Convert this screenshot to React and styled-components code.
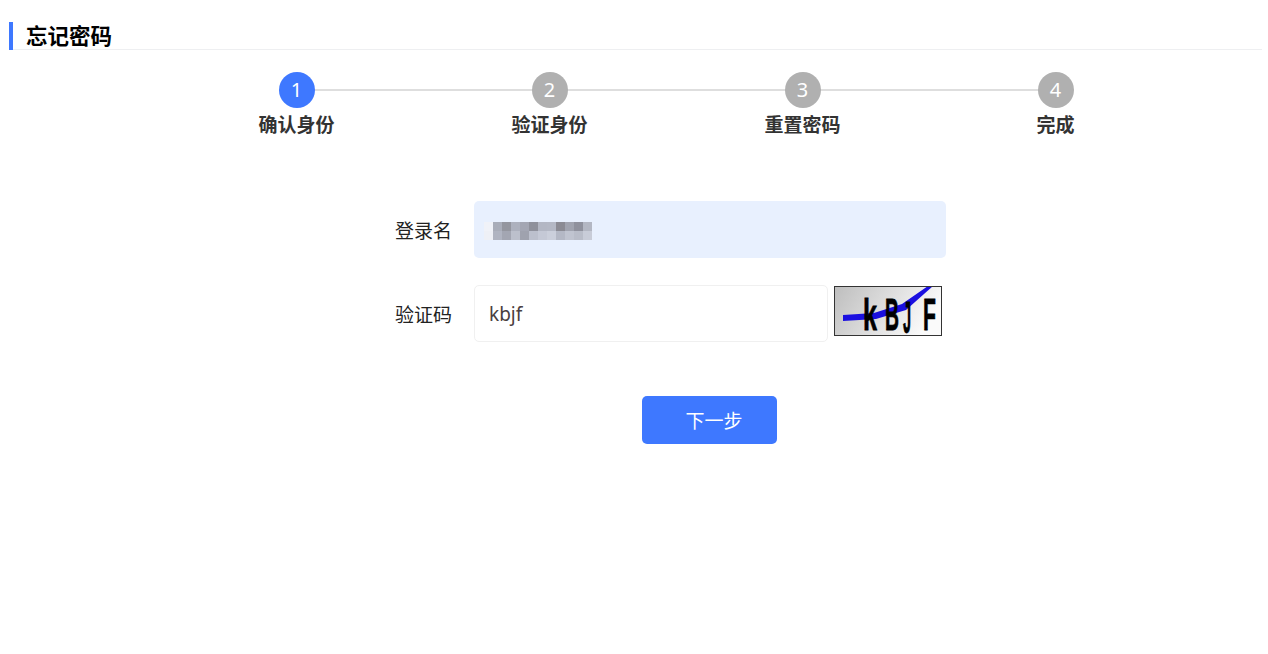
import React from "react";
import styled, { createGlobalStyle } from "styled-components";

const GlobalStyle = createGlobalStyle`
  html, body {
    margin: 0;
    padding: 0;
    background: #fff;
    font-family: "Noto Sans", "Noto Sans CJK SC", sans-serif;
  }
  * {
    box-sizing: border-box;
  }
`;

const steps = ["确认身份", "验证身份", "重置密码", "完成"];

// blurred login name, two rows of grey squares
const mosaicRows = [
  ["#f0f2f8", "#a9adb9", "#94969f", "#adb1be", "#a3a6b3", "#8f919c", "#b3b7c4", "#b4b8c5", "#8b8b94", "#a0a3af", "#8f919d", "#b3b7c3"],
  ["#eef0f6", "#b0b4c1", "#a3a6b2", "#bcc0cc", "#9fa2ae", "#bcc0cd", "#c5c9d6", "#cbcfdb", "#b4b8c5", "#c0c4d0", "#b9bdc9", "#c8ccd8"],
];

// squeezed letters, sx is the horizontal scale
const captchaLetters = [
  { ch: "k", x: 29, y: 44, sx: 0.57 },
  { ch: "B", x: 51, y: 44, sx: 0.44 },
  { ch: "J", x: 69, y: 47, sx: 0.33 },
  { ch: "F", x: 89, y: 44, sx: 0.48 },
];

function App() {
  return (
    <Page>
      <GlobalStyle />
      <Header>
        <Title>忘记密码</Title>
      </Header>
      <Stepper>
        {steps.map((label, i) => (
          <Step key={label} $last={i === steps.length - 1}>
            <Circle $active={i === 0}>{i + 1}</Circle>
            <StepLabel>{label}</StepLabel>
          </Step>
        ))}
      </Stepper>
      <Form>
        <Row>
          <Label>登录名</Label>
          <FilledField>
            <Mosaic>
              {mosaicRows.flat().map((c, i) => (
                <MosaicCell key={i} $color={c} />
              ))}
            </Mosaic>
          </FilledField>
        </Row>
        <Row $top={27}>
          <Label>验证码</Label>
          <Field>kbjf</Field>
          <Captcha />
        </Row>
        <Actions>
          <NextButton>下一步</NextButton>
        </Actions>
      </Form>
    </Page>
  );
}

function Captcha() {
  return (
    <CaptchaBox viewBox="0 0 108 50" width="108" height="50">
      <defs>
        <linearGradient id="captchaBg" x1="0" y1="0" x2="1" y2="0.3">
          <stop offset="0" stopColor="#bdbdbd" />
          <stop offset="1" stopColor="#fafafa" />
        </linearGradient>
      </defs>
      <rect width="108" height="50" fill="url(#captchaBg)" />
      <path d="M9 29 L40 27 L68 18 L94 0 L99 0 L72 24 L42 33 L9 35 Z" fill="#1a0fe0" />
      {captchaLetters.map((l) => (
        <CaptchaText
          key={l.ch}
          transform={`translate(${l.x} ${l.y}) scale(${l.sx} 1)`}
          fontSize="44"
        >
          {l.ch}
        </CaptchaText>
      ))}
      <rect x="0.5" y="0.5" width="107" height="49" fill="none" stroke="#333" />
    </CaptchaBox>
  );
}

const Page = styled.div`
  min-height: 654px;
  padding: 22px 6px 0 9px;
  background: #fff;
`;

const Header = styled.div`
  height: 28px;
  border-bottom: 1px solid #eeeff1;
`;

const Title = styled.h1`
  margin: 0;
  height: 28px;
  padding-left: 13px;
  border-left: 4px solid #3e78ff;
  font-family: "Noto Sans CJK SC", sans-serif;
  font-size: 21.5px;
  font-weight: 700;
  line-height: 26px;
  color: #000;
`;

const Stepper = styled.div`
  display: flex;
  margin: 22px 0 0 161px;
`;

const Step = styled.div`
  position: relative;
  display: flex;
  flex-direction: column;
  align-items: center;
  width: 253px;

  &::after {
    content: "";
    display: ${(p) => (p.$last ? "none" : "block")};
    position: absolute;
    top: 17px;
    left: 127px;
    width: 253px;
    height: 2px;
    background: #dedede;
  }
`;

const Circle = styled.div`
  position: relative;
  z-index: 1;
  width: 36px;
  height: 36px;
  border-radius: 50%;
  background: ${(p) => (p.$active ? "#3e78ff" : "#b0b0b0")};
  color: #fff;
  font-size: 20px;
  line-height: 35px;
  text-align: center;
`;

const StepLabel = styled.div`
  margin-top: 2px;
  font-family: "Noto Sans CJK SC", sans-serif;
  font-size: 19px;
  font-weight: 700;
  line-height: 28px;
  color: #333;
  white-space: nowrap;
`;

const Form = styled.div`
  margin-top: 63px;
  padding-left: 465px;
`;

const Row = styled.div`
  display: flex;
  margin-top: ${(p) => p.$top || 0}px;
`;

const Label = styled.label`
  width: 78px;
  height: 57px;
  margin-left: -100px;
  margin-right: 22px;
  font-family: "Noto Sans CJK SC", sans-serif;
  font-size: 19px;
  line-height: 58px;
  color: #222;
  text-align: right;
`;

const FilledField = styled.div`
  display: flex;
  align-items: center;
  width: 472px;
  height: 57px;
  padding: 2px 0 0 10px;
  border-radius: 5px;
  background: #e8f0fe;
`;

const Mosaic = styled.div`
  display: grid;
  grid-template-columns: repeat(12, 9px);
  grid-auto-rows: 9px;
`;

const MosaicCell = styled.div`
  background: ${(p) => p.$color};
`;

const Field = styled.div`
  width: 354px;
  height: 57px;
  padding-left: 14px;
  border: 1px solid #f0f0f0;
  border-radius: 5px;
  font-size: 19px;
  line-height: 57px;
  color: #4a4040;
`;

const CaptchaBox = styled.svg`
  display: block;
  margin: 1px 0 0 6px;
`;

const CaptchaText = styled.text`
  font-family: "Liberation Sans", sans-serif;
  font-weight: 700;
  fill: #000;
  stroke: #000;
  stroke-width: 0.8px;
`;

const Actions = styled.div`
  margin-top: 54px;
  padding-left: 168px;
`;

const NextButton = styled.button`
  display: block;
  width: 135px;
  height: 48px;
  padding: 0 0 0 9px;
  border: 0;
  border-radius: 5px;
  background: #3e78ff;
  color: #fff;
  font-family: "Noto Sans CJK SC", sans-serif;
  font-size: 19px;
  line-height: 48px;
`;

export default App;
